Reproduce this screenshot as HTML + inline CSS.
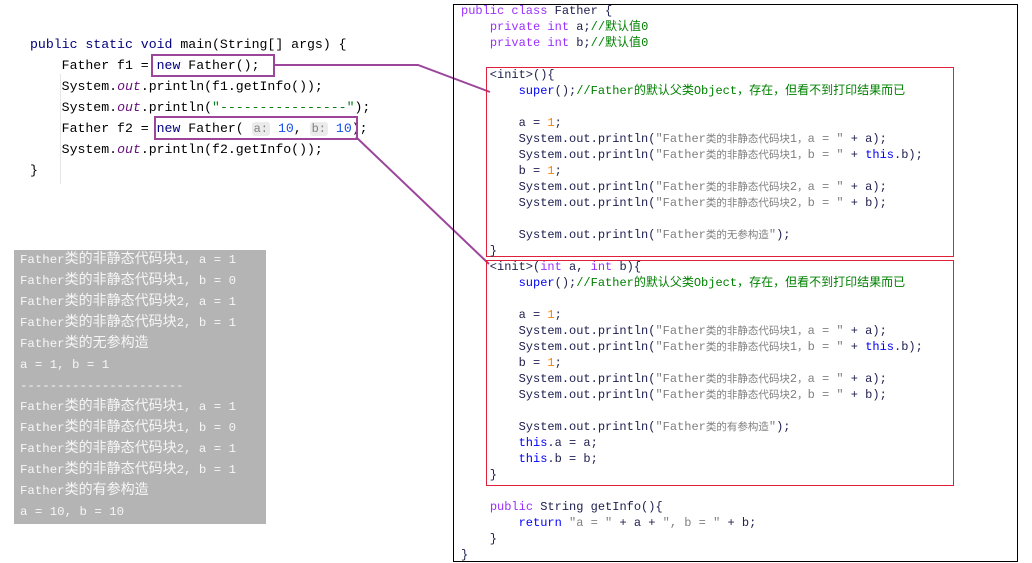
<!DOCTYPE html>
<html><head><meta charset="utf-8"><style>
body{margin:0;width:1032px;height:563px;background:#fff;position:relative;overflow:hidden}
.b{position:absolute;font-family:"Liberation Mono","Noto Sans CJK SC",monospace;}
.b div{white-space:pre;overflow:visible}
.L{font-size:13.2px;color:#000}
.L div{height:21px;line-height:21px}
.k{color:#000080}
.i{color:#660e7a;font-style:italic}
.s{color:#067d17}
.n{color:#1750eb}
.h{background:#ebebeb;color:#808080;border-radius:3px;padding:0 2px;font-size:12px;line-height:12px}
.R{font-size:12px;color:#202050}
.R div{height:16px;line-height:16px}
.c{font-family:"Noto Sans CJK SC",sans-serif;line-height:1}
.R .c{font-size:10.5px}
.R .cm .c{font-size:12px}
.kw{color:#9b30ff}
.bl{color:#0000ff}
.cm{color:#008000}
.st{color:#808080}
.nm{color:#ff8000}
.C{font-size:12.4px;color:#f6f6f6}
.C div{height:21px;line-height:21px}
.C .c{font-size:14px}
</style></head><body>
<div style="position:absolute;left:60px;top:74px;width:1px;height:110px;background:#e6e6e6"></div>
<div class="b L" style="left:30px;top:34px">
<div><span class="k">public static void</span> main(String[] args) {</div>
<div>    Father f1 = <span class="k">new</span> Father();</div>
<div>    System.<span class="i">out</span>.println(f1.getInfo());</div>
<div>    System.<span class="i">out</span>.println(<span class="s">"----------------"</span>);</div>
<div>    Father f2 = <span class="k">new</span> Father( <span class="h">a:</span> <span class="n">10</span>, <span class="h">b:</span> <span class="n">10</span>);</div>
<div>    System.<span class="i">out</span>.println(f2.getInfo());</div>
<div>}</div>
</div>
<div style="position:absolute;left:151px;top:54px;width:120px;height:19px;border:2px solid #9b459b"></div>
<div style="position:absolute;left:154px;top:116px;width:200px;height:20px;border:2px solid #9b459b"></div>
<svg style="position:absolute;left:0;top:0" width="1032" height="563"><polyline points="273,65 418,65 490,92" fill="none" stroke="#9b459b" stroke-width="2"/><line x1="356" y1="137" x2="489" y2="264" stroke="#9b459b" stroke-width="2"/></svg>

<div style="position:absolute;left:14px;top:250px;width:252px;height:274px;background:#b4b4b4"></div>
<div class="b C" style="left:20px;top:250px">
<div>Father<span class="c">类的非静态代码块</span>1, a = 1</div>
<div>Father<span class="c">类的非静态代码块</span>1, b = 0</div>
<div>Father<span class="c">类的非静态代码块</span>2, a = 1</div>
<div>Father<span class="c">类的非静态代码块</span>2, b = 1</div>
<div>Father<span class="c">类的无参构造</span></div>
<div>a = 1, b = 1</div>
<div>----------------------</div>
<div>Father<span class="c">类的非静态代码块</span>1, a = 1</div>
<div>Father<span class="c">类的非静态代码块</span>1, b = 0</div>
<div>Father<span class="c">类的非静态代码块</span>2, a = 1</div>
<div>Father<span class="c">类的非静态代码块</span>2, b = 1</div>
<div>Father<span class="c">类的有参构造</span></div>
<div>a = 10, b = 10</div>
</div>

<div style="position:absolute;left:453px;top:4px;width:563px;height:556px;border:1px solid #000"></div>
<div style="position:absolute;left:486px;top:67px;width:466px;height:188px;border:1px solid #e0203a"></div>
<div style="position:absolute;left:486px;top:260px;width:466px;height:224px;border:1px solid #e0203a"></div>
<div class="b R" style="left:461px;top:3px">
<div><span class="kw">public class</span> Father {</div>
<div>    <span class="kw">private int</span> a;<span class="cm">//<span class="c">默认值</span>0</span></div>
<div>    <span class="kw">private int</span> b;<span class="cm">//<span class="c">默认值</span>0</span></div>
<div> </div>
<div>    &lt;init&gt;(){</div>
<div>        <span class="bl">super</span>();<span class="cm">//Father<span class="c">的默认父类</span>Object<span class="c">，存在，但看不到打印结果而已</span></span></div>
<div> </div>
<div>        a = <span class="nm">1</span>;</div>
<div>        System.out.println(<span class="st">"Father<span class="c">类的非静态代码块</span>1<span class="c">，</span>a = "</span> + a);</div>
<div>        System.out.println(<span class="st">"Father<span class="c">类的非静态代码块</span>1<span class="c">，</span>b = "</span> + <span class="bl">this</span>.b);</div>
<div>        b = <span class="nm">1</span>;</div>
<div>        System.out.println(<span class="st">"Father<span class="c">类的非静态代码块</span>2<span class="c">，</span>a = "</span> + a);</div>
<div>        System.out.println(<span class="st">"Father<span class="c">类的非静态代码块</span>2<span class="c">，</span>b = "</span> + b);</div>
<div> </div>
<div>        System.out.println(<span class="st">"Father<span class="c">类的无参构造</span>"</span>);</div>
<div>    }</div>
<div>    &lt;init&gt;(<span class="kw">int</span> a, <span class="kw">int</span> b){</div>
<div>        <span class="bl">super</span>();<span class="cm">//Father<span class="c">的默认父类</span>Object<span class="c">，存在，但看不到打印结果而已</span></span></div>
<div> </div>
<div>        a = <span class="nm">1</span>;</div>
<div>        System.out.println(<span class="st">"Father<span class="c">类的非静态代码块</span>1<span class="c">，</span>a = "</span> + a);</div>
<div>        System.out.println(<span class="st">"Father<span class="c">类的非静态代码块</span>1<span class="c">，</span>b = "</span> + <span class="bl">this</span>.b);</div>
<div>        b = <span class="nm">1</span>;</div>
<div>        System.out.println(<span class="st">"Father<span class="c">类的非静态代码块</span>2<span class="c">，</span>a = "</span> + a);</div>
<div>        System.out.println(<span class="st">"Father<span class="c">类的非静态代码块</span>2<span class="c">，</span>b = "</span> + b);</div>
<div> </div>
<div>        System.out.println(<span class="st">"Father<span class="c">类的有参构造</span>"</span>);</div>
<div>        <span class="bl">this</span>.a = a;</div>
<div>        <span class="bl">this</span>.b = b;</div>
<div>    }</div>
<div> </div>
<div>    <span class="kw">public</span> String getInfo(){</div>
<div>        <span class="bl">return</span> <span class="st">"a = "</span> + a + <span class="st">", b = "</span> + b;</div>
<div>    }</div>
<div>}</div>
</div>
</body></html>
